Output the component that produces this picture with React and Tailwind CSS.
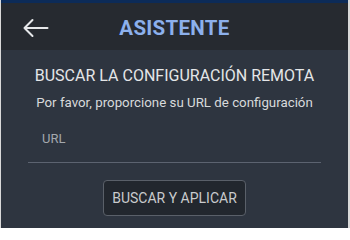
import React from 'react'

function BackArrow() {
  return (
    <svg width="26" height="20" viewBox="0 0 26 20" fill="none" className="shrink-0">
      <path d="M1.5 10H24.5M1.5 10L9.5 2M1.5 10L9.5 18" stroke="#e6e8ea" strokeWidth="2" strokeLinecap="round" strokeLinejoin="round" />
    </svg>
  )
}

export default function App() {
  return (
    <div className="flex w-[350px] h-[228px] bg-[#d9d9d9] font-['Roboto','Liberation_Sans',sans-serif] overflow-hidden">
      <div className="w-px shrink-0"></div>
      <div className="flex flex-col flex-1">
        <div className="h-[3px] bg-[#0c2b58]"></div>
        <header className="relative flex items-center justify-center h-[47px] bg-[#262a30]">
          <div className="absolute left-[22px] top-[15px]">
            <BackArrow />
          </div>
          <h1 className="text-[20.5px] font-bold text-[#8cb0ec] tracking-[0.3px] leading-none mt-[4px]">ASISTENTE</h1>
        </header>
        <main className="flex flex-col items-center flex-1 bg-[#2e3540]">
          <h2 className="mt-[18px] text-[16px] text-[#e4e6e8] leading-none">BUSCAR LA CONFIGURACIÓN REMOTA</h2>
          <p className="mt-[12px] text-[13.3px] text-[#d8dadc] leading-none">Por favor, proporcione su URL de configuración</p>
          <div className="w-[293px] mt-[23px] border-b border-[#5c6370] pb-[17px] pl-[14px]">
            <span className="block text-[13px] text-[#a3a8ae] leading-none">URL</span>
          </div>
          <button className="mt-[17px] h-[36px] w-[143px] rounded-[4px] border border-[#5a6069] bg-[#22272e] text-[14px] text-[#c9cbcd] leading-none">
            BUSCAR Y APLICAR
          </button>
        </main>
      </div>
      <div className="w-[2px] shrink-0"></div>
    </div>
  )
}
